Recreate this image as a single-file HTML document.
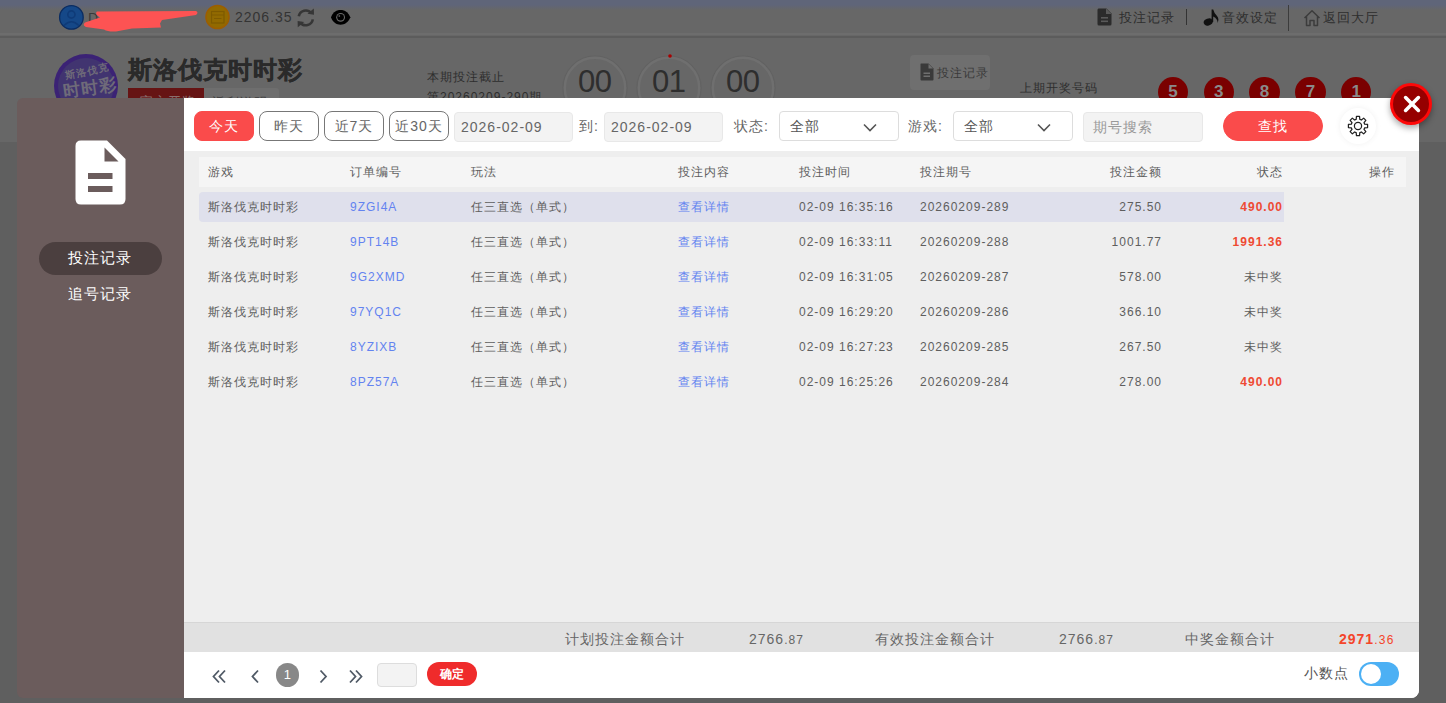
<!DOCTYPE html>
<html><head><meta charset="utf-8">
<style>
*{margin:0;padding:0;box-sizing:border-box}
html,body{width:1446px;height:703px;overflow:hidden}
body{position:relative;background:#5f5f5f;font-family:"Liberation Sans",sans-serif;letter-spacing:1px;color:#555}
.a{position:absolute;white-space:nowrap}
#top{left:0;top:0;width:1446px;height:38px;background:linear-gradient(#5f6579 0,#5f6579 5px,#676767 10px,#676767 100%)}
#topline1{left:0;top:33px;width:1446px;height:2px;background:#6d6d6d}
#topline2{left:0;top:36px;width:1446px;height:2px;background:#5c5c5c}
#hdr{left:0;top:38px;width:1446px;height:104px;background:#676767}
.tn{font-size:13px;line-height:16px;color:#2e2e2e}
#side{left:17px;top:98px;width:167px;height:600px;background:#6b5c5c;border-radius:6px 0 0 6px}
#main{left:184px;top:98px;width:1235px;height:600px;background:#fff;border-radius:0 0 8px 0;overflow:hidden}
.btn{position:absolute;top:13px;width:60px;height:30px;border:1px solid #777;border-radius:8px;font-size:14px;line-height:28px;text-align:center;color:#666;background:#fff}
.inp{position:absolute;top:14px;height:30px;border:1px solid #e8e8e8;border-radius:4px;background:#f3f3f3;font-size:14px;line-height:28px;padding-left:6px;color:#666}
.lbl{position:absolute;top:14px;font-size:14px;line-height:28px;color:#666}
.sel{position:absolute;top:13px;width:120px;height:30px;border:1px solid #ddd;border-radius:4px;background:#fff;font-size:14px;line-height:28px;padding-left:10px;color:#555}
.sel svg{position:absolute;left:83px;top:11px}
#tbl{position:absolute;left:0;top:53px;width:1235px;height:471px;background:#eee}
#thead{position:absolute;left:15px;top:6px;width:1207px;height:30px;background:#f5f5f5}
.c{position:absolute;font-size:12px;line-height:30px;color:#5e5e5e;white-space:nowrap}
.r{text-align:right}
.blue{color:#6383f0}
.red{color:#ee4a33;font-weight:bold}
#hl{position:absolute;left:15px;top:41px;width:1085px;height:30px;background:#dfe0ec;border-radius:4px 0 0 4px}
#sum{position:absolute;left:0;top:524px;width:1235px;height:30px;background:#e1e1e1;border-top:1px solid #d6d6d6}
.s{position:absolute;top:7px;font-size:14px;line-height:18px;color:#666;white-space:nowrap}
.s small{font-size:12px}
#pg{position:absolute;left:0;top:554px;width:1235px;height:46px;background:#fff}
</style></head><body>
<div id="top" class="a"></div>
<div id="topline1" class="a"></div>
<div id="topline2" class="a"></div>
<div id="hdr" class="a"></div>

<!-- top bar -->
<svg class="a" style="left:58px;top:4px" width="28" height="28" viewBox="0 0 28 28">
  <circle cx="13.4" cy="13.4" r="11.8" fill="#154888" stroke="#0b2d62" stroke-width="1.3"/>
  <circle cx="13.4" cy="10.5" r="3.6" fill="none" stroke="#0f3b78" stroke-width="1.6"/>
  <path d="M6 21.5 Q13.4 14 20.8 21.5" fill="none" stroke="#0f3b78" stroke-width="1.6"/>
</svg>
<div class="a" style="left:88px;top:10px;font-size:14px;line-height:16px;color:#3a3a3a">D</div>
<svg class="a" style="left:0px;top:0px" width="220" height="40" viewBox="0 0 220 40">
  <path d="M97 11.5 L196 11 Q199 12.5 196 15 L162 20 L160 23.5 L161 27.5 L132 28.5 L116 31.5 Q108 32 104 29.5 L86 27 Q82 25 85 22.5 L100 17.5 Q94 14 97 11.5 Z" fill="#fd5353"/>
</svg>
<svg class="a" style="left:205px;top:4px" width="26" height="26" viewBox="0 0 26 26">
  <circle cx="12.5" cy="13" r="11.5" fill="#926a00" stroke="#9c5e00" stroke-width="1.6"/>
  <rect x="6.5" y="7.5" width="12.5" height="11.5" fill="none" stroke="#7e5a00" stroke-width="1.2"/>
  <path d="M6.5 11 H19 M9 14.5 H16.5" stroke="#7e5a00" stroke-width="1"/>
</svg>
<div class="a" style="left:235px;top:9px;font-size:14px;line-height:16px;color:#343434">2206.35</div>
<svg class="a" style="left:296px;top:8px" width="20" height="20" viewBox="0 0 20 20">
  <path d="M2.8 8.2 A7 7 0 0 1 15.2 5.2" fill="none" stroke="#363636" stroke-width="2.6"/>
  <path d="M11.5 5.8 L18 6.8 L17.8 0.5 Z" fill="#363636"/>
  <path d="M16.8 11.4 A7 7 0 0 1 4.4 14.6" fill="none" stroke="#363636" stroke-width="2.6"/>
  <path d="M8.2 14 L1.6 13 L1.8 19.2 Z" fill="#363636"/>
</svg>
<svg class="a" style="left:331px;top:10px" width="20" height="15" viewBox="0 0 20 15">
  <path d="M0 7.3 C3 -2.6, 16 -2.6, 19.3 7.3 C16 17.2, 3 17.2, 0 7.3 Z" fill="#000"/>
  <circle cx="9.6" cy="7.3" r="4.4" fill="#6a6a6a"/>
  <circle cx="9.6" cy="7.3" r="3.3" fill="#000"/>
  <circle cx="8.3" cy="6" r="0.9" fill="#555"/>
</svg>

<svg class="a" style="left:1097px;top:8px" width="15" height="18" viewBox="0 0 15 18">
  <path d="M1.5 0.5 H9.5 L14.5 5.5 V16 Q14.5 17.5 13 17.5 H2 Q0.5 17.5 0.5 16 V2 Q0.5 0.5 1.5 0.5 Z" fill="#2b2b2b"/>
  <path d="M9 0.5 V6 H14.5" fill="#5a5a5a"/>
  <rect x="4" y="9" width="7" height="1.6" fill="#5a5a5a"/>
  <rect x="4" y="12.5" width="7" height="1.6" fill="#5a5a5a"/>
</svg>
<div class="a tn" style="left:1119px;top:9.5px">投注记录</div>
<div class="a" style="left:1186px;top:9px;width:1px;height:16px;background:#333"></div>
<svg class="a" style="left:1203px;top:8px" width="17" height="18" viewBox="0 0 17 18">
  <ellipse cx="5.2" cy="14" rx="4.6" ry="3.4" transform="rotate(-20 5.2 14)" fill="#111"/>
  <path d="M8.6 14 V1.5 L10.2 1.5 Q11 5 14 8 Q16.5 11 14.5 15 Q15 11 10.2 8.5 V14 Z" fill="#111"/>
</svg>
<div class="a tn" style="left:1222px;top:9.5px">音效设定</div>
<div class="a" style="left:1288px;top:5px;width:1px;height:26px;background:#3c3c3c"></div>
<svg class="a" style="left:1302.5px;top:9px" width="18" height="18" viewBox="0 0 18 18">
  <path d="M1.5 9 L9 1.8 L16.5 9 M3.5 7.5 V16.5 H7 V11.5 H11 V16.5 H14.5 V7.5" fill="none" stroke="#3c3c3c" stroke-width="1.5" stroke-linejoin="round"/>
</svg>
<div class="a tn" style="left:1323px;top:9.5px">返回大厅</div>

<!-- header -->
<svg class="a" style="left:50px;top:50px" width="72" height="72" viewBox="0 0 72 72">
  <circle cx="36" cy="36" r="32" fill="#3b2275"/>
  <circle cx="36" cy="36" r="28" fill="#413470"/>
  <g fill="#6f6b79" font-family="Liberation Sans" font-weight="bold">
  <text x="16" y="25" font-size="10" transform="rotate(-12 36 25)">斯洛伐克</text>
  <text x="14" y="44" font-size="17" transform="rotate(-8 36 44)">时时彩</text>
  </g>
</svg>
<div class="a" style="left:128px;top:55px;font-size:24px;line-height:30px;font-weight:bold;color:#2a2a2a;-webkit-text-stroke:0.4px #2a2a2a">斯洛伐克时时彩</div>
<div class="a" style="left:128px;top:88px;width:76px;height:12px;background:#661414;overflow:hidden"><div style="position:absolute;left:12px;top:6px;font-size:13px;line-height:16px;color:#8a6e6e">官方开奖</div></div>
<div class="a" style="left:204px;top:88px;width:75px;height:12px;background:#6e6e6e;border-radius:0 3px 0 0;overflow:hidden"><div style="position:absolute;left:8px;top:7px;font-size:13px;line-height:16px;color:#3e3e3e">返利说明</div></div>
<div class="a" style="left:427px;top:69px;font-size:12px;line-height:16px;color:#2e2e2e">本期投注截止</div>
<div class="a" style="left:427px;top:89px;font-size:12px;line-height:16px;color:#2e2e2e">第20260209-290期</div>
<svg class="a" style="left:555px;top:48px" width="230" height="60" viewBox="0 0 230 60">
  <circle cx="40" cy="40" r="32" fill="none" stroke="#626262" stroke-width="1.2"/>
  <circle cx="40" cy="40" r="30.2" fill="none" stroke="#6f6f6f" stroke-width="2.4"/>
  <circle cx="114" cy="40" r="32" fill="none" stroke="#626262" stroke-width="1.2"/>
  <circle cx="114" cy="40" r="30.2" fill="none" stroke="#6f6f6f" stroke-width="2.4"/>
  <circle cx="188" cy="40" r="32" fill="none" stroke="#626262" stroke-width="1.2"/>
  <circle cx="188" cy="40" r="30.2" fill="none" stroke="#6f6f6f" stroke-width="2.4"/>
  <circle cx="115" cy="8" r="1.8" fill="#a00"/>
</svg>
<div class="a" style="left:578px;top:65px;font-size:31px;line-height:34px;letter-spacing:-0.6px;color:#2e2e2e">00</div>
<div class="a" style="left:652px;top:65px;font-size:31px;line-height:34px;letter-spacing:-0.6px;color:#2e2e2e">01</div>
<div class="a" style="left:726px;top:65px;font-size:31px;line-height:34px;letter-spacing:-0.6px;color:#2e2e2e">00</div>
<div class="a" style="left:910px;top:55px;width:80px;height:35px;background:#6f6f6f;border-radius:4px"></div>
<svg class="a" style="left:920px;top:63px" width="14" height="18" viewBox="0 0 14 18">
  <path d="M1 0.5 H8.5 L13.5 5.5 V16.5 Q13.5 17.5 12.5 17.5 H1.5 Q0.5 17.5 0.5 16.5 V1.5 Q0.5 0.5 1 0.5 Z" fill="#3a3a3a"/>
  <path d="M8.5 1 V5.5 H13" fill="#6f6f6f"/>
  <rect x="3.5" y="9.5" width="6.5" height="1.5" fill="#6f6f6f"/>
  <rect x="3.5" y="12.5" width="6.5" height="1.5" fill="#6f6f6f"/>
</svg>
<div class="a" style="left:937px;top:65px;font-size:12px;line-height:16px;color:#3a3a3a">投注记录</div>
<div class="a" style="left:1020px;top:80px;font-size:12px;line-height:16px;color:#2e2e2e">上期开奖号码</div>
<div class="a" style="left:1157.8px;top:77px;width:30.4px;height:30.4px;border-radius:50%;background:#7a0000;color:#8a8a8a;font-weight:bold;font-size:17px;line-height:30px;text-align:center;letter-spacing:0">5</div>
<div class="a" style="left:1203.6px;top:77px;width:30.4px;height:30.4px;border-radius:50%;background:#7a0000;color:#8a8a8a;font-weight:bold;font-size:17px;line-height:30px;text-align:center;letter-spacing:0">3</div>
<div class="a" style="left:1249.4px;top:77px;width:30.4px;height:30.4px;border-radius:50%;background:#7a0000;color:#8a8a8a;font-weight:bold;font-size:17px;line-height:30px;text-align:center;letter-spacing:0">8</div>
<div class="a" style="left:1295.2px;top:77px;width:30.4px;height:30.4px;border-radius:50%;background:#7a0000;color:#8a8a8a;font-weight:bold;font-size:17px;line-height:30px;text-align:center;letter-spacing:0">7</div>
<div class="a" style="left:1341.0px;top:77px;width:30.4px;height:30.4px;border-radius:50%;background:#7a0000;color:#8a8a8a;font-weight:bold;font-size:17px;line-height:30px;text-align:center;letter-spacing:0">1</div>

<!-- modal -->
<div id="side" class="a">
  <svg style="position:absolute;left:58px;top:42px" width="52" height="66" viewBox="0 0 52 66">
    <path d="M6 0.5 H32 L50.5 19 V59 Q50.5 64.5 45 64.5 H6 Q0.5 64.5 0.5 59 V6 Q0.5 0.5 6 0.5 Z" fill="#fff"/>
    <path d="M29.5 7.5 V21.5 H43.5 Z" fill="#6b5c5c"/>
    <rect x="13" y="33" width="24.5" height="6" fill="#6b5c5c"/>
    <rect x="13" y="46" width="24.5" height="6" fill="#6b5c5c"/>
  </svg>
  <div style="position:absolute;left:22px;top:144px;width:123px;height:33px;border-radius:17px;background:#4b3f3f"></div>
  <div class="a" style="left:51px;top:150px;font-size:15px;line-height:20px;color:#fff">投注记录</div>
  <div class="a" style="left:51px;top:186px;font-size:15px;line-height:20px;color:#fff">追号记录</div>
</div>
<div id="main" class="a">
  <div class="btn" style="left:10px;background:#fa4b4b;border-color:#fa4b4b;color:#fff">今天</div>
  <div class="btn" style="left:75px">昨天</div>
  <div class="btn" style="left:140px">近7天</div>
  <div class="btn" style="left:205px">近30天</div>
  <div class="inp" style="left:270px;width:119px">2026-02-09</div>
  <div class="lbl" style="left:395px">到:</div>
  <div class="inp" style="left:420px;width:119px">2026-02-09</div>
  <div class="lbl" style="left:550px">状态:</div>
  <div class="sel" style="left:595px">全部<svg width="14" height="9" viewBox="0 0 14 9"><path d="M1 1.5 L7 7.5 L13 1.5" fill="none" stroke="#555" stroke-width="1.6"/></svg></div>
  <div class="lbl" style="left:724px">游戏:</div>
  <div class="sel" style="left:769px">全部<svg width="14" height="9" viewBox="0 0 14 9"><path d="M1 1.5 L7 7.5 L13 1.5" fill="none" stroke="#555" stroke-width="1.6"/></svg></div>
  <div class="inp" style="left:899px;width:120px;color:#999;padding-left:9px">期号搜索</div>
  <div class="btn" style="left:1039px;width:100px;border-radius:15px;background:#fa4b4b;border-color:#fa4b4b;color:#fff">查找</div>
  <div style="position:absolute;left:1156px;top:10px;width:36px;height:36px;border-radius:50%;background:#fff;box-shadow:0 0 6px rgba(0,0,0,.06)"></div>
  <svg style="position:absolute;left:1163px;top:17px" width="22" height="22" viewBox="0 0 22 22">
  <path d="M9.17 4.35 L9.46 1.42 L12.54 1.42 L12.83 4.35 L14.41 5.00 L16.68 3.14 L18.86 5.32 L17.00 7.59 L17.65 9.17 L20.58 9.46 L20.58 12.54 L17.65 12.83 L17.00 14.41 L18.86 16.68 L16.68 18.86 L14.41 17.00 L12.83 17.65 L12.54 20.58 L9.46 20.58 L9.17 17.65 L7.59 17.00 L5.32 18.86 L3.14 16.68 L5.00 14.41 L4.35 12.83 L1.42 12.54 L1.42 9.46 L4.35 9.17 L5.00 7.59 L3.14 5.32 L5.32 3.14 L7.59 5.00 Z" fill="none" stroke="#222" stroke-width="1.25" stroke-linejoin="round"/>
  <circle cx="11" cy="11" r="3.6" fill="none" stroke="#222" stroke-width="1.25"/>
</svg>

  <div id="tbl">
    <div id="thead"></div>
    <div id="hl"></div>
<div class="c" style="left:24px;top:6px;">游戏</div>
<div class="c" style="left:166px;top:6px;">订单编号</div>
<div class="c" style="left:287px;top:6px;">玩法</div>
<div class="c" style="left:494px;top:6px;">投注内容</div>
<div class="c" style="left:615px;top:6px;">投注时间</div>
<div class="c" style="left:736px;top:6px;">投注期号</div>
<div class="c r" style="right:257px;top:6px;">投注金额</div>
<div class="c r" style="right:136px;top:6px;">状态</div>
<div class="c r" style="right:24px;top:6px;">操作</div>
<div class="c" style="left:24px;top:41px;">斯洛伐克时时彩</div>
<div class="c blue" style="left:166px;top:41px;">9ZGI4A</div>
<div class="c" style="left:287px;top:41px;">任三直选（单式）</div>
<div class="c blue" style="left:494px;top:41px;">查看详情</div>
<div class="c" style="left:615px;top:41px;">02-09 16:35:16</div>
<div class="c" style="left:736px;top:41px;">20260209-289</div>
<div class="c r" style="right:257px;top:41px;">275.50</div>
<div class="c r red" style="right:136px;top:41px;">490.00</div>
<div class="c" style="left:24px;top:76px;">斯洛伐克时时彩</div>
<div class="c blue" style="left:166px;top:76px;">9PT14B</div>
<div class="c" style="left:287px;top:76px;">任三直选（单式）</div>
<div class="c blue" style="left:494px;top:76px;">查看详情</div>
<div class="c" style="left:615px;top:76px;">02-09 16:33:11</div>
<div class="c" style="left:736px;top:76px;">20260209-288</div>
<div class="c r" style="right:257px;top:76px;">1001.77</div>
<div class="c r red" style="right:136px;top:76px;">1991.36</div>
<div class="c" style="left:24px;top:111px;">斯洛伐克时时彩</div>
<div class="c blue" style="left:166px;top:111px;">9G2XMD</div>
<div class="c" style="left:287px;top:111px;">任三直选（单式）</div>
<div class="c blue" style="left:494px;top:111px;">查看详情</div>
<div class="c" style="left:615px;top:111px;">02-09 16:31:05</div>
<div class="c" style="left:736px;top:111px;">20260209-287</div>
<div class="c r" style="right:257px;top:111px;">578.00</div>
<div class="c r" style="right:136px;top:111px;">未中奖</div>
<div class="c" style="left:24px;top:146px;">斯洛伐克时时彩</div>
<div class="c blue" style="left:166px;top:146px;">97YQ1C</div>
<div class="c" style="left:287px;top:146px;">任三直选（单式）</div>
<div class="c blue" style="left:494px;top:146px;">查看详情</div>
<div class="c" style="left:615px;top:146px;">02-09 16:29:20</div>
<div class="c" style="left:736px;top:146px;">20260209-286</div>
<div class="c r" style="right:257px;top:146px;">366.10</div>
<div class="c r" style="right:136px;top:146px;">未中奖</div>
<div class="c" style="left:24px;top:181px;">斯洛伐克时时彩</div>
<div class="c blue" style="left:166px;top:181px;">8YZIXB</div>
<div class="c" style="left:287px;top:181px;">任三直选（单式）</div>
<div class="c blue" style="left:494px;top:181px;">查看详情</div>
<div class="c" style="left:615px;top:181px;">02-09 16:27:23</div>
<div class="c" style="left:736px;top:181px;">20260209-285</div>
<div class="c r" style="right:257px;top:181px;">267.50</div>
<div class="c r" style="right:136px;top:181px;">未中奖</div>
<div class="c" style="left:24px;top:216px;">斯洛伐克时时彩</div>
<div class="c blue" style="left:166px;top:216px;">8PZ57A</div>
<div class="c" style="left:287px;top:216px;">任三直选（单式）</div>
<div class="c blue" style="left:494px;top:216px;">查看详情</div>
<div class="c" style="left:615px;top:216px;">02-09 16:25:26</div>
<div class="c" style="left:736px;top:216px;">20260209-284</div>
<div class="c r" style="right:257px;top:216px;">278.00</div>
<div class="c r red" style="right:136px;top:216px;">490.00</div>

  </div>
  <div id="sum">
    <div class="s" style="left:381px">计划投注金额合计</div>
    <div class="s" style="left:565px">2766<small>.87</small></div>
    <div class="s" style="left:691px">有效投注金额合计</div>
    <div class="s" style="left:875px">2766<small>.87</small></div>
    <div class="s" style="left:1001px">中奖金额合计</div>
    <div class="s" style="left:1155px;color:#f4452a;font-weight:bold">2971<small style="font-weight:normal;letter-spacing:1.3px">.36</small></div>
  </div>
  <div id="pg">
    <svg style="position:absolute;left:26px;top:13px" width="160" height="24" viewBox="0 0 160 24">
      <g fill="none" stroke="#505a66" stroke-width="1.8">
        <path d="M9 5.5 L3.5 11.5 L9 17.5 M15 5.5 L9.5 11.5 L15 17.5"/>
        <path d="M48 5.5 L42.5 11.5 L48 17.5"/>
        <path d="M110.5 5.5 L116 11.5 L110.5 17.5"/>
        <path d="M140 5.5 L145.5 11.5 L140 17.5 M146 5.5 L151.5 11.5 L146 17.5"/>
      </g>
    </svg>
    <div style="position:absolute;left:91.5px;top:11px;width:23.5px;height:23.5px;border-radius:50%;background:#888;color:#fff;font-size:13px;line-height:23.5px;text-align:center;letter-spacing:0">1</div>
    <div style="position:absolute;left:193px;top:11px;width:40px;height:23.5px;border-radius:4px;background:#f3f3f3;border:1px solid #ddd"></div>
    <div style="position:absolute;left:243px;top:10px;width:50px;height:24px;border-radius:12px;background:#ef2b2b;color:#fff;font-size:12px;line-height:24px;text-align:center;font-weight:bold;letter-spacing:0">确定</div>
    <div class="a" style="left:1120px;top:12px;font-size:14px;line-height:18px;color:#555">小数点</div>
    <div style="position:absolute;left:1175px;top:10px;width:40px;height:24px;border-radius:12px;background:#4cb0f4"></div>
    <div style="position:absolute;left:1177px;top:12px;width:20px;height:20px;border-radius:50%;background:#fff"></div>
  </div>
</div>

<!-- close -->
<div class="a" style="left:1390px;top:83px;width:42px;height:42px;border-radius:50%;background:#ff0808;box-shadow:0 3px 6px rgba(0,0,0,.35)"></div>
<div class="a" style="left:1393px;top:86px;width:36px;height:36px;border-radius:50%;background:#960000"></div>
<svg class="a" style="left:1400.5px;top:92.8px" width="22" height="22" viewBox="0 0 22 22">
  <path d="M4.6 4.6 L17.4 17.4 M17.4 4.6 L4.6 17.4" stroke="#fff" stroke-width="3.6" stroke-linecap="round"/>
</svg>
</body></html>
